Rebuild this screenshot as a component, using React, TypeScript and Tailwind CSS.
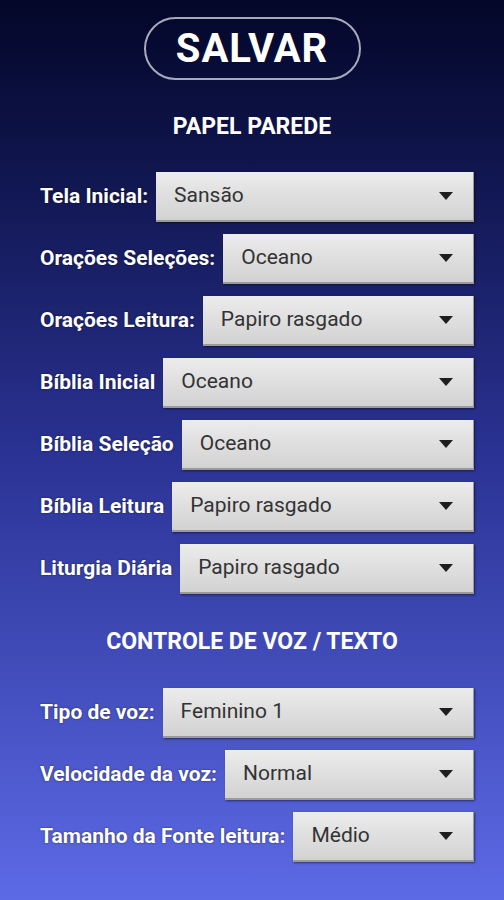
const papel = [
  { label: "Tela Inicial:", value: "Sansão" },
  { label: "Orações Seleções:", value: "Oceano" },
  { label: "Orações Leitura:", value: "Papiro rasgado" },
  { label: "Bíblia Inicial", value: "Oceano" },
  { label: "Bíblia Seleção", value: "Oceano" },
  { label: "Bíblia Leitura", value: "Papiro rasgado" },
  { label: "Liturgia Diária", value: "Papiro rasgado" },
];

const voz = [
  { label: "Tipo de voz:", value: "Feminino 1" },
  { label: "Velocidade da voz:", value: "Normal" },
  { label: "Tamanho da Fonte leitura:", value: "Médio" },
];

function Row({ label, value }: { label: string; value: string }) {
  return (
    <div className="flex items-center h-[50px] mb-3">
      <span className="text-white font-bold text-[21px] whitespace-nowrap [text-shadow:0_0_2px_rgba(0,0,0,0.6)]">
        {label}
      </span>
      <div className="ml-2 flex-1 h-[50px] flex items-center justify-between pl-[18px] pr-5 bg-gradient-to-b from-[#ececec] to-[#d2d2d2] border-b-2 border-r border-[#9a9a9a] shadow-[1px_1px_2px_rgba(0,0,0,0.5)]">
        <span className="text-[#333] text-[21px]">{value}</span>
        <svg width="14" height="8" viewBox="0 0 14 8">
          <path d="M0 0 L14 0 L7 8 Z" fill="#1e1e1e" />
        </svg>
      </div>
    </div>
  );
}

export default function App() {
  return (
    <div className="w-[504px] h-[900px] overflow-hidden bg-gradient-to-b from-[#040729] via-[#2a3293] to-[#5d6ae6] font-['Roboto',sans-serif]">
      <div className="flex justify-center pt-[17px]">
        <button className="w-[217px] h-[63px] rounded-full border-2 border-[#a9aab8] text-white font-bold text-[40px] tracking-wide">
          SALVAR
        </button>
      </div>
      <h2 className="text-center text-white font-bold text-[23px] mt-[30px] mb-[27px]">PAPEL PAREDE</h2>
      <div className="pl-10 pr-[30px]">
        {papel.map((r) => (
          <Row key={r.label} {...r} />
        ))}
      </div>
      <h2 className="text-center text-white font-bold text-[23px] mt-[31px] mb-[29px]">CONTROLE DE VOZ / TEXTO</h2>
      <div className="pl-10 pr-[30px]">
        {voz.map((r) => (
          <Row key={r.label} {...r} />
        ))}
      </div>
    </div>
  );
}
